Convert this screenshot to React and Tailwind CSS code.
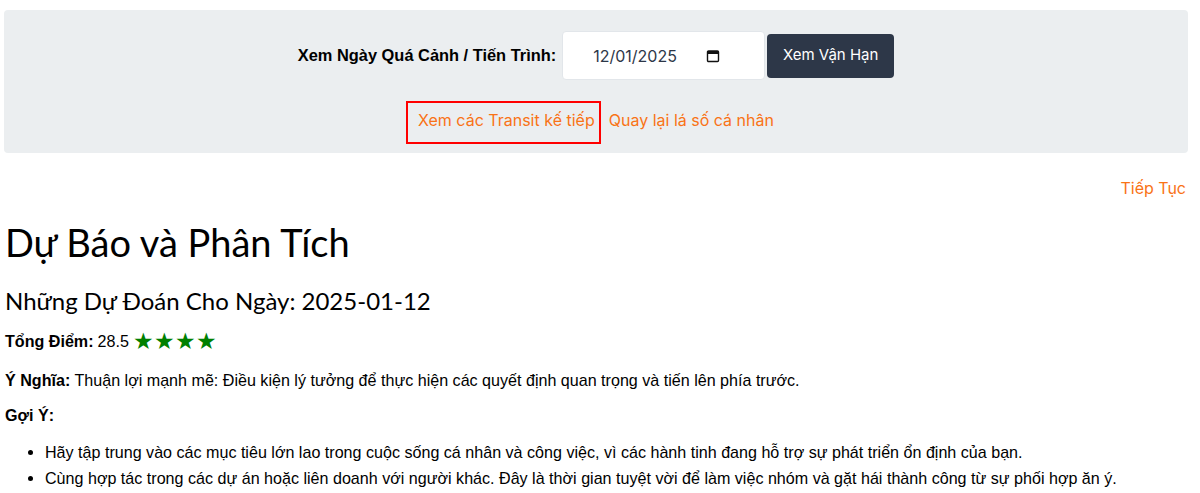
import React from "react";

const body = { fontFamily: '"Liberation Sans", Arial, sans-serif' };
const head = { fontFamily: 'Lato, "Noto Sans", sans-serif' };
const ui = { fontFamily: 'Inter, "Noto Sans", sans-serif' };

function CalendarIcon() {
  return (
    <svg width="14" height="14" viewBox="0 0 14 14" fill="none">
      <rect x="1.5" y="2" width="11" height="10.5" rx="1" stroke="#111" strokeWidth="1.4" />
      <rect x="1.5" y="2" width="11" height="3" fill="#111" />
    </svg>
  );
}

export default function App() {
  return (
    <div className="bg-white text-black" style={body}>
      <div className="pt-[10px] pl-[4px] pr-[12px]">
        {/* form panel */}
        <div className="bg-[#ebeef0] rounded-[4px] h-[143px] flex flex-col items-center">
          <div className="flex items-center mt-[21px]">
            <span className="font-bold text-[16.4px] mr-[6px]">Xem Ngày Quá Cảnh / Tiến Trình:</span>
            <div className="w-[203px] h-[49px] bg-white rounded-[4px] border border-[#e2e6ea] flex items-center pl-[30px] pr-[44px] justify-between">
              <span className="text-[16px] text-[#2d3748]" style={ui}>12/01/2025</span>
              <CalendarIcon />
            </div>
            <button className="ml-[2px] h-[44px] w-[127px] bg-[#2d3748] text-white text-[15px] rounded-[4px]" style={ui}>
              Xem Vận Hạn
            </button>
          </div>
          <div className="flex items-center mt-[28px] text-[16px] leading-[24px] text-[#f97316]" style={ui}>
            <span className="relative">
              Xem các Transit kế tiếp
              <span className="absolute -left-[12px] -right-[6px] -top-[7px] -bottom-[12px] border-2 border-[#ff0000]"></span>
            </span>
            <span className="ml-[14px]">Quay lại lá số cá nhân</span>
          </div>
        </div>

        <div className="flex justify-end mt-[23px] pr-[2px]">
          <span className="text-[#f97316] text-[16px] leading-[24px]" style={ui}>Tiếp Tục</span>
        </div>

        <div className="pl-[1px]">
          <h1 className="text-[38px] leading-[45px] mt-[20px]" style={head}>Dự Báo và Phân Tích</h1>
          <h2 className="text-[24px] leading-[29px] mt-[21px]" style={head}>Những Dự Đoán Cho Ngày: 2025-01-12</h2>
          <p className="text-[16.1px] h-[24px] mt-[14px] flex items-center">
            <b>Tổng Điểm:</b>
            <span className="ml-[4px]">28.5</span>
            <span className="ml-[4px] text-[#008000] text-[23px] leading-none">★★★★</span>
          </p>
          <p className="text-[16.1px] leading-[24px] mt-[15px]">
            <b>Ý Nghĩa:</b> Thuận lợi mạnh mẽ: Điều kiện lý tưởng để thực hiện các quyết định quan trọng và tiến lên phía trước.
          </p>
          <p className="text-[16.1px] leading-[24px] mt-[11px] font-bold">Gợi Ý:</p>
          <ul className="list-disc pl-[40px] mt-[12px] text-[16.1px] leading-[26px]">
            <li>Hãy tập trung vào các mục tiêu lớn lao trong cuộc sống cá nhân và công việc, vì các hành tinh đang hỗ trợ sự phát triển ổn định của bạn.</li>
            <li>Cùng hợp tác trong các dự án hoặc liên doanh với người khác. Đây là thời gian tuyệt vời để làm việc nhóm và gặt hái thành công từ sự phối hợp ăn ý.</li>
          </ul>
        </div>
      </div>
    </div>
  );
}
